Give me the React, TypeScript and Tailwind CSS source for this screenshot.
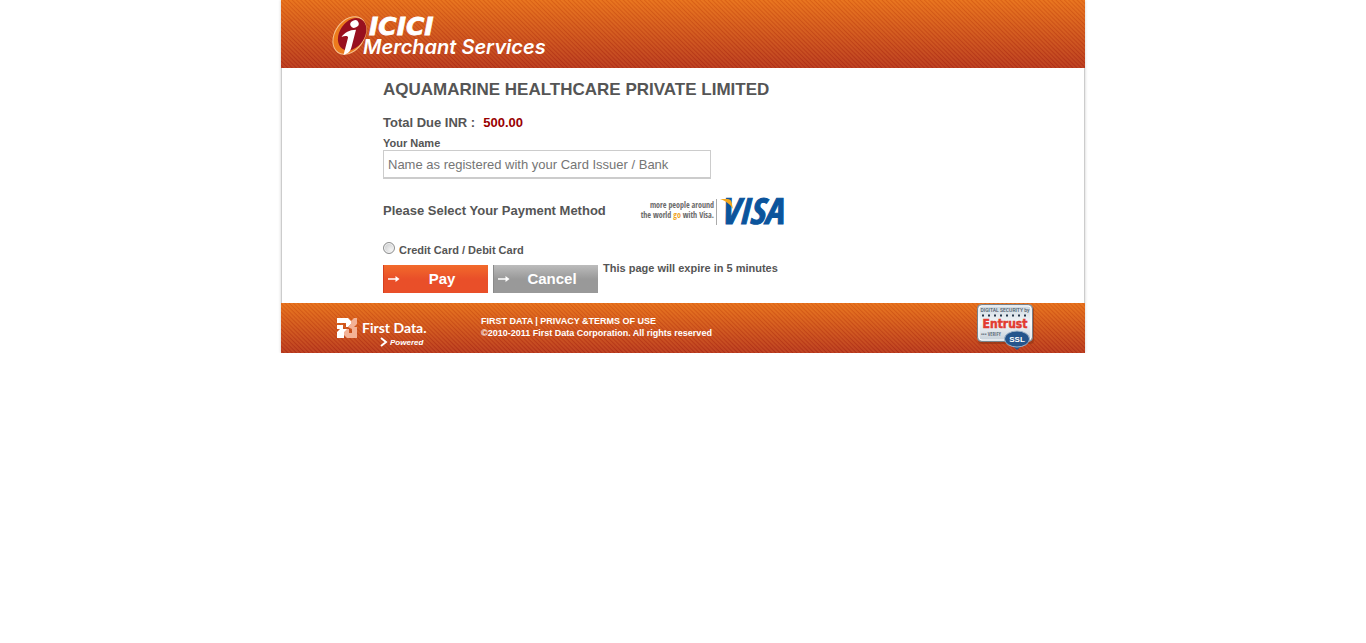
import React, { useState } from "react";

const band =
  "bg-[repeating-linear-gradient(45deg,rgba(255,180,80,0.12)_0px,rgba(255,180,80,0.12)_1px,rgba(120,10,0,0.10)_2px,rgba(255,180,80,0.12)_3px),linear-gradient(to_bottom,#e66d19,#b5331c)]";

function IciciLogo() {
  return (
    <svg width="232" height="46" viewBox="0 0 232 46" role="img" aria-label="ICICI Merchant Services" className="shrink-0 overflow-visible">
      <g transform="rotate(34 18.500 22.500)">
        <ellipse cx="18.500" cy="22.500" rx="15" ry="21" fill="#f7c08e" />
        <ellipse cx="18.500" cy="22.500" rx="14" ry="20" fill="#ec7a1c" />
        <ellipse cx="20" cy="20" rx="12.500" ry="17.500" fill="#98101f" />
      </g>
      <ellipse cx="23.500" cy="11" rx="4.300" ry="3.600" fill="#fff" transform="rotate(-25 23.500 11)" />
      <path d="M10.500 24C14 19.500 18 17 25 16.800L20.500 34C19.600 37.500 18 40.500 12.500 42L17 24.700C17.400 23.100 14.500 22.300 10.500 24Z" fill="#fff" />
      <g fill="#fff" fontStyle="italic">
        <text x="38" y="22" fontFamily="DejaVu Sans, sans-serif" fontWeight="700" fontSize="25" stroke="#fff" strokeWidth="0.8">ICICI</text>
        <text x="32" y="41" fontFamily="Inter, sans-serif" fontWeight="600" fontSize="20">Merchant Services</text>
      </g>
    </svg>
  );
}

function VisaLogo() {
  return (
    <svg width="162" height="46" viewBox="0 0 162 46" role="img" aria-label="more people around the world go with Visa" className="shrink-0 overflow-visible">
      <g fontFamily="Open Sans Condensed, Roboto, sans-serif" fontSize="8" fill="#6a6a6a" textAnchor="end">
        <text x="81" y="20">more people around</text>
        <text x="81" y="30">the world <tspan fill="#f0a51e">go</tspan> with Visa.</text>
      </g>
      <path d="M83.500 11V37" stroke="#aaa" />
      <text x="87" y="36" fontFamily="Open Sans Condensed, Lato, sans-serif" fontSize="36" fontWeight="700" fontStyle="italic" fill="#0b549c" stroke="#0b549c">VISA</text>
      <path d="M87 11H94.500C96.500 11 98 12 98.500 14L100 21C97 16 93 13 87 11Z" fill="#f5a81c" />
    </svg>
  );
}

function FirstDataLogo() {
  return (
    <svg width="94" height="34" viewBox="0 0 94 34" role="img" aria-label="First Data Powered" className="shrink-0">
      <path d="M1 3H12L15 6V9L12 12H10V8H1ZM1 10H7V14L11 14V16L8 18V23H1V17L4 14L1 14Z" fill="#fff" />
      <path d="M21 3V9L18 12H21V23H11L8 20V17L11 14H13V18H16V14L12 12L15 9V6L18 3Z" fill="#f3b296" />
      <g fill="#fff">
        <text x="26" y="18" fontFamily="Lato, sans-serif" fontSize="14" fontWeight="700">First Data.</text>
        <text x="54" y="30" fontFamily="Liberation Sans, sans-serif" fontSize="8" fontWeight="700" fontStyle="italic">Powered</text>
      </g>
      <path d="M45 23L50 27L45 31" fill="none" stroke="#fff" strokeWidth="2" />
    </svg>
  );
}

function EntrustSeal() {
  return (
    <svg width="58" height="48" viewBox="0 0 58 48" role="img" aria-label="Digital security by Entrust, verified SSL" className="shrink-0">
      <defs>
        <linearGradient id="seal" x1="0" y1="0" x2="0" y2="1">
          <stop offset="0" stopColor="#c9d5de" />
          <stop offset="0.5" stopColor="#f4f6f8" />
          <stop offset="1" stopColor="#c3ced7" />
        </linearGradient>
      </defs>
      <rect x="2" y="3" width="56" height="38" rx="4" fill="#8c3414" opacity="0.6" />
      <rect x="1.500" y="1.500" width="55" height="37" rx="4" fill="url(#seal)" stroke="#78828b" />
      <rect x="3" y="3" width="52" height="34" rx="3" fill="none" stroke="#fff" />
      <text x="29" y="9" textAnchor="middle" fontFamily="Roboto, sans-serif" fontSize="5" fontWeight="500" fill="#4c5c6b">DIGITAL SECURITY by</text>
      <path d="M6 12.500H53" stroke="#26384c" strokeWidth="2" strokeDasharray="2 4" />
      <text x="29" y="25" textAnchor="middle" fontFamily="DejaVu Sans Condensed, DejaVu Sans, sans-serif" fontSize="12" fontWeight="700" fill="#e23b30" stroke="#e23b30" strokeWidth="0.5">Entrust</text>
      <text x="5" y="33" fontFamily="Open Sans Condensed, Liberation Sans, sans-serif" fontSize="5" fill="#66727e">••• VERIFY</text>
      <path d="M35 42L41 47L47 42Z" fill="#24558c" />
      <ellipse cx="41" cy="36" rx="12.500" ry="8" fill="#24558c" stroke="#9fb4c9" />
      <text x="41" y="39" textAnchor="middle" fontFamily="Liberation Sans, sans-serif" fontSize="8" fontWeight="700" fill="#fff">SSL</text>
    </svg>
  );
}

function Arrow() {
  return (
    <svg width="12" height="8" viewBox="0 0 12 8" aria-hidden="true" className="shrink-0">
      <path d="M0 4H10" stroke="#fff" strokeWidth="1.500" />
      <path d="M7.500 1L11.500 4L7.500 7Z" fill="#fff" />
    </svg>
  );
}

export default function App() {
  const [name, setName] = useState("");
  return (
    <div className="mx-auto w-full max-w-[804px] bg-white font-['Liberation_Sans',Arial,sans-serif] text-[#555] shadow-[0_0_3px_rgba(0,0,0,0.2)]">
      <header className={`${band} flex h-[68px] items-center pt-1 pl-[50px]`}>
        <IciciLogo />
      </header>

      <main className="border-x border-[#ccc] pt-[13px] pr-4 pb-[10px] pl-[101px]">
        <h1 className="text-[17px] leading-[18px] font-bold">AQUAMARINE HEALTHCARE PRIVATE LIMITED</h1>
        <p className="mt-4 text-[13px] leading-4 font-bold">
          Total Due INR :<span className="ml-2 text-[#990000]">500.00</span>
        </p>
        <form onSubmit={(e) => e.preventDefault()}>
          <label htmlFor="name" className="mt-[5px] block text-[11px] leading-[14px] font-bold">Your Name</label>
          <input
            id="name"
            type="text"
            value={name}
            onChange={(e) => setName(e.target.value)}
            placeholder="Name as registered with your Card Issuer / Bank"
            className="block h-[29px] w-full max-w-[328px] border border-b-2 border-[#ccc] bg-white px-1 text-[13px] text-[#555] outline-none placeholder:text-[#757575]"
          />
          <div className="mt-[9px] flex items-center">
            <h2 className="w-[250px] text-[13px] leading-4 font-bold">Please Select Your Payment Method</h2>
            <VisaLogo />
          </div>
          <div className="mt-2 flex h-[14px] items-start gap-1">
            <input
              id="card"
              type="radio"
              name="method"
              className="size-3 appearance-none rounded-full border border-[#8e8f8f] bg-[radial-gradient(circle_at_70%_70%,#f4f4f4,#c4c6c8)] shadow-[inset_0_0_0_1px_#f4f4f4] checked:bg-[#555]"
            />
            <label htmlFor="card" className="text-[11px] leading-4 font-bold">Credit Card / Debit Card</label>
          </div>
          <div className="mt-[9px] flex items-start gap-[5px]">
            <button type="submit" className="flex h-7 w-[105px] items-center border-l border-[#d5401f] bg-linear-to-b from-[#f26a2b] to-[#e94f29] to-50% pl-1 text-[15px] font-bold text-white">
              <Arrow />
              <span className="flex-1 pr-1 text-center">Pay</span>
            </button>
            <button type="button" className="flex h-7 w-[105px] items-center border-l border-[#8a8a8a] bg-linear-to-b from-[#bcbcbc] to-[#999] to-50% pl-1 text-[15px] font-bold text-white">
              <Arrow />
              <span className="flex-1 pr-1 text-center">Cancel</span>
            </button>
            <p className="-mt-1 text-[11px] leading-[14px] font-bold">This page will expire in 5 minutes</p>
          </div>
        </form>
      </main>

      <footer className={`${band} flex h-[50px] items-start pr-[51px] pl-[55px] text-white`}>
        <div className="w-[145px] pt-3">
          <FirstDataLogo />
        </div>
        <div className="flex-1 pt-3 text-[9px] leading-3 font-bold">
          <p>
            <a href="#first-data">FIRST DATA</a> | <a href="#privacy">PRIVACY &amp;TERMS OF USE</a>
          </p>
          <p>©2010-2011 First Data Corporation. All rights reserved</p>
        </div>
        <EntrustSeal />
      </footer>
    </div>
  );
}
